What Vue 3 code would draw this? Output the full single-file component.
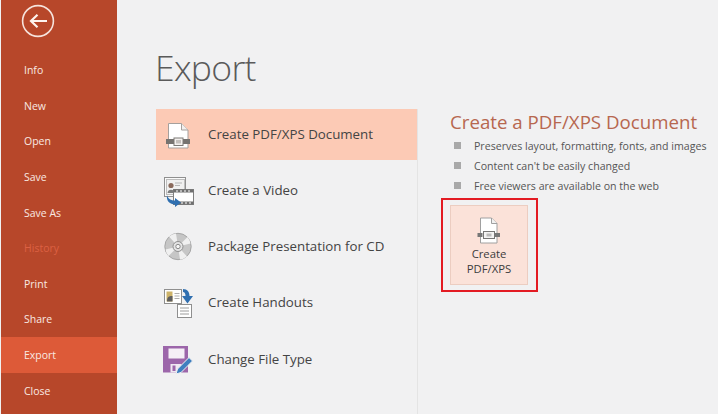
<script setup>
const menu = ['Info', 'New', 'Open', 'Save', 'Save As', 'History', 'Print', 'Share', 'Export', 'Close']
const bullets = [
  'Preserves layout, formatting, fonts, and images',
  "Content can't be easily changed",
  'Free viewers are available on the web'
]
</script>

<template>
  <div class="app">
    <aside class="side">
      <div class="back">
        <svg width="34" height="34" viewBox="0 0 34 34" fill="none">
          <circle cx="17" cy="17" r="15.4" stroke="#f6e3dc" stroke-width="1.6" />
          <path d="M26 17H10M16.5 10.8 10 17l6.5 6.2" stroke="#fdf3ee" stroke-width="2.2" />
        </svg>
      </div>
      <ul class="menu">
        <li v-for="m in menu" :key="m" :class="{ active: m === 'Export', dim: m === 'History' }">{{ m }}</li>
      </ul>
    </aside>
    <main class="main">
      <h1 class="title">Export</h1>
      <div class="cols">
        <div class="list">
          <div class="row selected">
            <span class="ico">
              <svg width="32" height="30" viewBox="0 0 32 30" fill="none">
                <path d="M6.500 3.500h13l6.500 6.500v18h-19.500z" fill="#fff" stroke="#a5a09d" />
                <path d="M19.500 3.500V10H26" fill="#f3efed" stroke="#a5a09d" />
                <rect x="4" y="19" width="8" height="5" fill="#767370" />
                <rect x="21" y="19" width="7" height="5" fill="#767370" />
                <rect x="12" y="18" width="9" height="7.500" fill="#f4f1ef" stroke="#7d7a77" />
                <rect x="14" y="20" width="5" height="3.500" fill="#c4c0bd" />
              </svg>
            </span>
            <span class="label">Create PDF/XPS Document</span>
          </div>
          <div class="row">
            <span class="ico">
              <svg width="32" height="32" viewBox="0 0 32 32" fill="none">
                <rect x="2.500" y="2.500" width="21" height="19" fill="#fafafa" stroke="#8f8f8f" />
                <rect x="4.500" y="4.500" width="18" height="15" fill="#f0f0f0" stroke="#bdbdbd" />
                <circle cx="9" cy="10.500" r="2.600" fill="#8a6a5c" />
                <path d="M5.500 18c0-4.500 7-4.500 7 0z" fill="#7c7c7c" />
                <path d="M13 8h7M13 10.500h5" stroke="#b5b5b5" />
                <rect x="11.500" y="14.500" width="20" height="15" fill="#fff" stroke="#808080" />
                <path d="M11.500 14.500h20v3h-20zM11.500 26.500h20v3h-20z" fill="#707070" />
                <path d="M14 16h2m2 0h2m2 0h2m2 0h2M19 28h2m2 0h2m2 0h2" stroke="#fff" />
                <path d="M5 20c1 4 4 5.500 8 5.500V23l6 4.500-6 4.500v-2.500C8 29.500 4 26 5 20z" fill="#2f6fb0" />
              </svg>
            </span>
            <span class="label">Create a Video</span>
          </div>
          <div class="row">
            <span class="ico">
              <svg width="32" height="30" viewBox="0 0 32 30" fill="none">
                <circle cx="16" cy="14.500" r="13.200" fill="#c6c6c6" stroke="#a6a6a6" />
                <path d="M16 14.500 7 4.500a13.200 13.200 0 0 1 7-3zM16 14.500l9 10a13.200 13.200 0 0 1-7 3zM16 14.500l12.500-3a13.200 13.200 0 0 0-3-6.500zM16 14.500l-12.500 3a13.200 13.200 0 0 0 3 6.500z" fill="#f0f0f0" />
                <circle cx="16" cy="14.500" r="5" fill="#e4e4e4" stroke="#8f8f8f" />
                <circle cx="16" cy="14.500" r="2.200" fill="#f6f6f6" stroke="#8a8a8a" />
              </svg>
            </span>
            <span class="label">Package Presentation for CD</span>
          </div>
          <div class="row">
            <span class="ico">
              <svg width="32" height="30" viewBox="0 0 32 30" fill="none">
                <rect x="2.500" y="1.500" width="17" height="14" fill="#fff" stroke="#8f8f8f" />
                <rect x="4.500" y="3.500" width="6" height="10" fill="#cdb36a" />
                <path d="M5 13.500c0-4 1-5.500 5.500-5.500v5.500z" fill="#5f5f5f" />
                <path d="M12.500 5.500h5M12.500 8h5M12.500 10.500h5" stroke="#adadad" />
                <rect x="15.500" y="16.500" width="14" height="13" fill="#fff" stroke="#8f8f8f" />
                <path d="M18 20h9M18 23h9M18 26h9" stroke="#9c9c9c" />
                <path d="M21 1c4.500 0 6.500 3 6.500 7H31l-5.500 7.500L20 8h3.500c0-2.500-1-4-2.500-4z" fill="#2f6fb0" />
              </svg>
            </span>
            <span class="label">Create Handouts</span>
          </div>
          <div class="row">
            <span class="ico">
              <svg width="32" height="30" viewBox="0 0 32 30" fill="none">
                <path d="M1 1h25v26.500H1z" fill="#9c66aa" />
                <rect x="6.500" y="3.500" width="16" height="10" fill="#f5eff6" />
                <rect x="8.500" y="19" width="11" height="8.500" fill="#f0e8f2" />
                <rect x="10.500" y="20.500" width="3" height="5.500" fill="#9c66aa" />
                <path d="M14 29l1.500-5L27 12.500l3.500 3.500L19 27.500z" fill="#3f7fbf" stroke="#f1f1f2" />
              </svg>
            </span>
            <span class="label">Change File Type</span>
          </div>
        </div>
        <section class="detail">
          <h2 class="heading">Create a PDF/XPS Document</h2>
          <ul class="bullets">
            <li v-for="b in bullets" :key="b"><i class="sq"></i>{{ b }}</li>
          </ul>
          <div class="callout">
            <button class="btn">
              <svg width="24" height="28" viewBox="0 0 24 28" fill="none">
                <path d="M3.500 1h11l5.500 5.500V26h-16.500z" fill="#fff" stroke="#a0a0a0" />
                <path d="M14.500 1v5.500H20" fill="#f1f1f1" stroke="#a0a0a0" />
                <rect x="0.500" y="16" width="5" height="4" fill="#777" />
                <rect x="18" y="16" width="5" height="4" fill="#777" />
                <rect x="6.500" y="14.500" width="11" height="7" fill="#f4f4f4" stroke="#777" />
                <rect x="9.500" y="16.500" width="5" height="3" fill="#bbb" />
              </svg>
              <span class="btn-label">Create<br />PDF/XPS</span>
            </button>
          </div>
        </section>
      </div>
    </main>
  </div>
</template>

<style>
html, body { margin: 0; padding: 0; }
</style>

<style scoped>
.app {
  width: 718px;
  height: 414px;
  display: flex;
  overflow: hidden;
  background: #f1f1f2;
  font-family: "Open Sans", "Noto Sans", sans-serif;
  color: #444;
  padding-left: 1px;
  box-sizing: border-box;
}
.side {
  width: 116px;
  flex: none;
  background: #b7472a;
  color: #f9e9e2;
}
.back {
  height: 52px;
  box-sizing: border-box;
  padding: 4px 0 0 20px;
}
.menu {
  list-style: none;
  margin: 0;
  padding: 0;
}
.menu li {
  height: 35.65px;
  line-height: 37.500px;
  padding-left: 23px;
  font-size: 10.500px;
}
.menu li.active { background: #dd5a38; }
.menu li.dim { color: #dc6143; }
.main {
  flex: 1;
  min-width: 0;
  display: flex;
  flex-direction: column;
  padding-left: 39px;
}
.title {
  margin: 0 0 0 -1px;
  height: 109px;
  box-sizing: border-box;
  padding-top: 38px;
  font-size: 35.500px;
  line-height: 58px;
  font-weight: 300;
  letter-spacing: -0.7px;
  color: #5a5a5a;
}
.cols {
  display: flex;
  flex: 1;
  min-height: 0;
}
.list {
  width: 261px;
  flex: none;
  border-right: 1px solid #e4e4e4;
}
.row {
  height: 51px;
  margin-bottom: 5.300px;
  display: flex;
  align-items: center;
  font-size: 13.300px;
  color: #444;
}
.row.selected { background: #fccab5; }
.ico {
  width: 32px;
  height: 30px;
  margin: 0 20px 0 0;
  padding-left: 6px;
  box-sizing: content-box;
  display: flex;
  align-items: center;
}
.label { margin-bottom: 2px; margin-left: -6px; }
.detail {
  flex: 1;
  padding-left: 32px;
}
.heading {
  margin: 0;
  font-size: 18.700px;
  line-height: 26px;
  font-weight: 400;
  color: #b7674f;
  white-space: nowrap;
}
.bullets {
  list-style: none;
  margin: 2px 0 0;
  padding: 0;
}
.bullets li {
  height: 19.800px;
  line-height: 19.800px;
  font-size: 10.600px;
  color: #555;
  display: flex;
  align-items: center;
  white-space: nowrap;
}
.sq {
  width: 7px;
  height: 7px;
  background: #a9a9a9;
  margin: -2px 13px 0 4px;
  flex: none;
}
.callout {
  margin: 1.500px 0 0 -9px;
  width: 97px;
  height: 94px;
  box-sizing: border-box;
  border: 2px solid #e31b23;
  padding: 5px 7px;
}
.btn {
  width: 78px;
  height: 80px;
  box-sizing: border-box;
  padding: 11px 0 0;
  background: #fbe2d9;
  border: 1px solid #eccdc1;
  display: flex;
  flex-direction: column;
  align-items: center;
  font-family: inherit;
  color: #3c3c3c;
  font-size: 11.300px;
  line-height: 15px;
}
.btn-label { margin-top: 1px; }
</style>
